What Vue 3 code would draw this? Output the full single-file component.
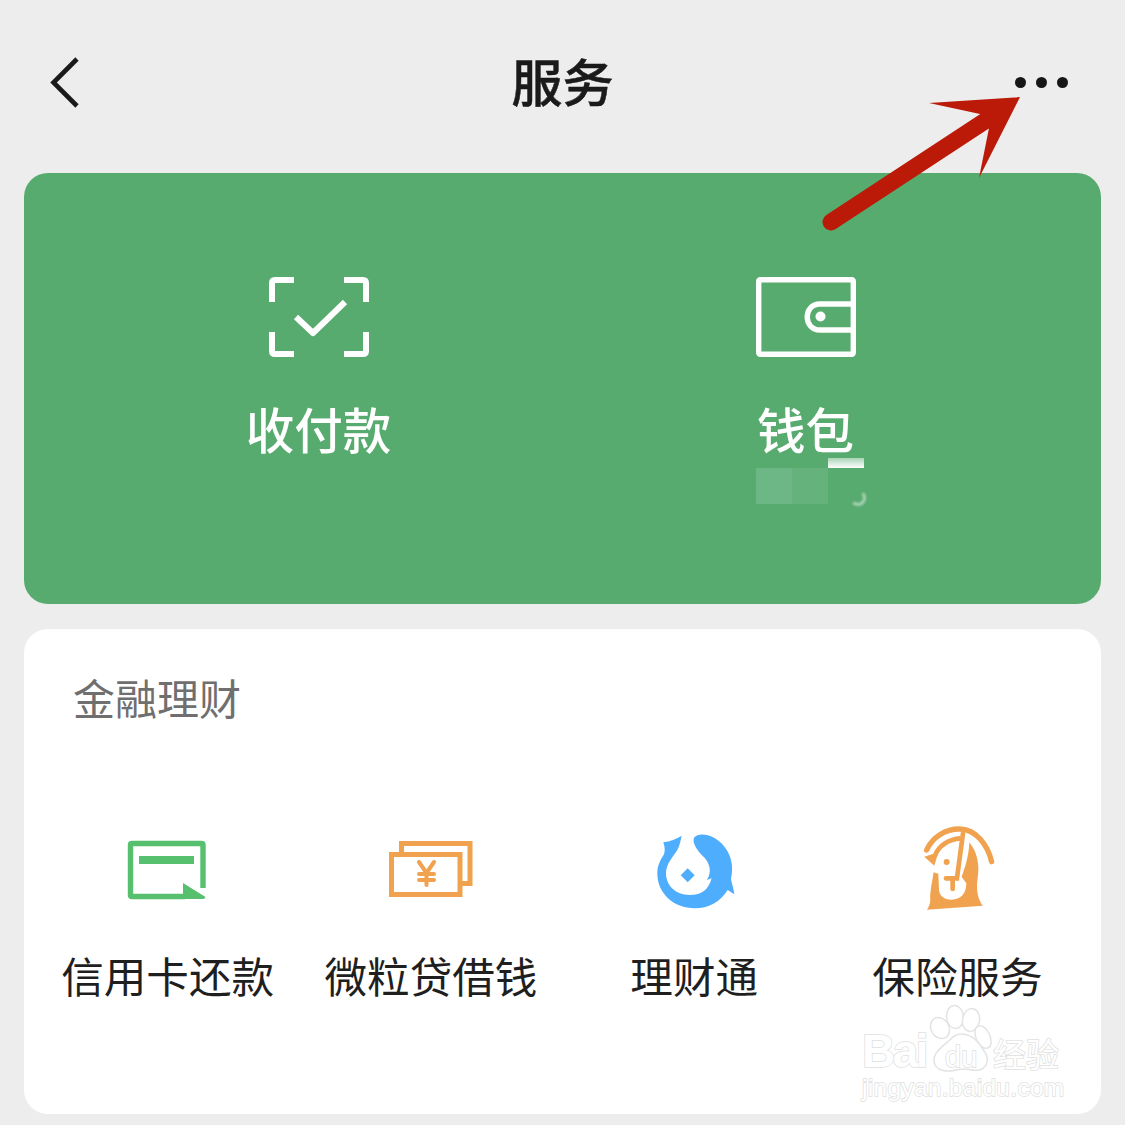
<script setup>
const finance = [
  { label: '信用卡还款', icon: 'card' },
  { label: '微粒贷借钱', icon: 'loan' },
  { label: '理财通', icon: 'fish' },
  { label: '保险服务', icon: 'penguin' }
]
</script>

<template>
  <div class="page">
    <header class="nav">
      <svg class="back" width="32" height="54" viewBox="0 0 32 54" fill="none">
        <path d="M28 3 L4.500 26.500 L28 50" stroke="#1a1a1a" stroke-width="4.600" />
      </svg>
      <h1 class="title">服务</h1>
      <div class="dots"><i></i><i></i><i></i></div>
    </header>

    <section class="pay">
      <div class="pay-item">
        <svg class="pay-icon" width="100" height="80" viewBox="0 0 100 80" fill="none" stroke="#fff" stroke-width="6">
          <path d="M25 3 H6 Q3 3 3 6 V25 M75 3 H94 Q97 3 97 6 V25 M3 55 V74 Q3 77 6 77 H25 M97 55 V74 Q97 77 94 77 H75" />
          <path d="M27 40 L44 56 L76 25" stroke-linejoin="round" />
        </svg>
        <div class="pay-label">收付款</div>
      </div>
      <div class="pay-item">
        <svg class="pay-icon" width="100" height="80" viewBox="0 0 100 80" fill="none" stroke="#fff" stroke-width="5.400">
          <rect x="2.700" y="2.700" width="94.600" height="74.600" rx="1.500" />
          <path d="M97 27 H64 C47 27 47 53 64 53 H97" />
          <circle cx="64.500" cy="39.500" r="5" fill="#fff" stroke="none" />
        </svg>
        <div class="pay-label">钱包</div>
        <div class="smudge">
          <span class="smudge-a"></span>
          <span class="smudge-b"></span>
          <span class="smudge-c"></span>
          <span class="smudge-d"></span>
        </div>
      </div>
    </section>

    <section class="panel">
      <h2 class="panel-title">金融理财</h2>
      <div class="grid">
        <div v-for="item in finance" :key="item.label" class="cell">
          <svg class="cell-icon" width="110" height="90" viewBox="0 0 110 90" fill="none">
            <template v-if="item.icon === 'card'">
              <path d="M90 63 V20 Q90 18.500 88.500 18.500 H19 Q17.500 18.500 17.500 20 V70 Q17.500 71.500 19 71.500 H72" stroke="#56c06e" stroke-width="5.400" />
              <rect x="26" y="31" width="55" height="8" fill="#56c06e" />
              <path d="M70 58 L92.500 72 Q92 74 90 74 H70 Z" fill="#56c06e" />
            </template>
            <template v-else-if="item.icon === 'loan'">
              <path d="M25.500 27 V18.500 H94 V58.500 H86" stroke="#f0a24f" stroke-width="5" />
              <rect x="15.500" y="29.500" width="68.500" height="40" stroke="#f0a24f" stroke-width="5" />
              <path d="M43 37 L50.500 48 L58 37 M43 49 H58 M43 55 H58 M50.500 48 V60" stroke="#f0a24f" stroke-width="4" stroke-linecap="round" stroke-linejoin="round" />
            </template>
            <g v-else-if="item.icon === 'fish'" transform="translate(1 -10) scale(.3333)">
              <path fill="#4fadfd" d="M125 62 C110 72 90 80 70 82 C74 95 76 105 72 118 C58 140 52 155 52 175 C52 235 100 280 165 280 C205 280 240 262 263 225 L283 238 C280 215 275 205 273 192 C285 140 265 95 225 70 C205 58 175 52 162 68 C155 85 175 110 195 130 C215 155 212 180 200 195 L215 190 C205 225 185 240 150 240 C105 240 78 210 78 175 C78 145 100 125 112 105 C120 90 122 75 125 62 Z" />
              <path fill="#4fadfd" d="M143 160 L164 181 L143 202 L122 181 Z" />
            </g>
            <g v-else transform="translate(-262 -10) scale(.3333)">
              <path d="M857 105 C875 65 915 42 955 42 C1005 42 1040 90 1052 140" stroke="#f0a24f" stroke-width="16" stroke-linecap="round" />
              <path d="M882 122 C892 92 925 72 958 70" stroke="#f0a24f" stroke-width="14" />
              <path d="M966 55 L948 190 L915 190 M935 190 V222" stroke="#f0a24f" stroke-width="14" stroke-linecap="round" />
              <path fill="#f0a24f" d="M850 125 L892 112 L880 152 Z" />
              <circle cx="917" cy="141" r="9" fill="#f0a24f" />
              <path fill="#f0a24f" d="M878 172 C873 205 866 235 868 255 C868 268 862 278 858 284 L1025 272 C1010 250 1005 225 1010 190 C1018 145 1005 105 985 82 C985 105 978 145 962 185 L976 205 C976 238 958 254 932 254 C908 254 894 242 894 222 L892 176 Z" />
            </g>
          </svg>
          <div class="cell-label">{{ item.label }}</div>
        </div>
      </div>
    </section>

    <svg class="arrow" width="220" height="150" viewBox="0 0 220 150" fill="none">
      <path d="M11 132 L165 31" stroke="#bb1a09" stroke-width="17" stroke-linecap="round" />
      <path d="M200 7 L109 13 L160 24 L169 38 L159 88 Z" fill="#bb1a09" />
    </svg>

    <div class="mark">
      <svg class="paw" width="120" height="80" viewBox="0 0 120 80" fill="#fff" stroke="#e3e3e3" stroke-width="1.500">
        <ellipse cx="53" cy="26" rx="9" ry="11" transform="rotate(-30 53 26)" />
        <ellipse cx="68" cy="15" rx="8.500" ry="11.500" transform="rotate(-5 68 15)" />
        <ellipse cx="84" cy="18" rx="8.500" ry="11.500" transform="rotate(10 84 18)" />
        <ellipse cx="96" cy="35" rx="7" ry="12" transform="rotate(-25 96 35)" />
        <path d="M63 38 C56 44 47 50 47 58 C47 66 54 69 62 69 C68 69 72 67 76 67 C82 67 88 69 92 68 C100 66 102 58 99 52 C94 44 87 32 75 32 C70 32 66 34 63 38 Z" />
      </svg>
      <div class="mark-row">
        <span class="mark-bai">Bai</span><span class="mark-du">du</span><span class="mark-cn">经验</span>
      </div>
      <div class="mark-url">jingyan.baidu.com</div>
    </div>
  </div>
</template>

<style>
html, body { margin: 0; background: #ededed; }
</style>

<style scoped>
.page {
  position: relative;
  width: 1125px;
  height: 1125px;
  overflow: hidden;
  background: #ededed;
  font-family: "Noto Sans CJK SC", "Noto Sans", sans-serif;
  display: flex;
  flex-direction: column;
  padding: 0 24px;
  box-sizing: border-box;
}
.nav {
  height: 173px;
  flex: none;
  display: grid;
  grid-template-columns: 1fr auto 1fr;
  align-items: center;
  padding-bottom: 8px;
  box-sizing: border-box;
}
.back { margin-left: 25px; }
.title {
  margin: 0 0 6px 0;
  font-size: 51px;
  font-weight: 500;
  -webkit-text-stroke: .5px #1a1a1a;
  color: #1a1a1a;
  line-height: 60px;
}
.dots {
  justify-self: end;
  display: flex;
  gap: 10px;
  margin-right: 33px;
}
.dots i {
  width: 11px;
  height: 11px;
  border-radius: 50%;
  background: #161616;
}
.pay {
  height: 431px;
  flex: none;
  box-sizing: border-box;
  background: #57ab6f;
  border-radius: 24px;
  display: grid;
  grid-template-columns: 487px 487px;
  padding: 104px 0 0 51px;
}
.pay-item {
  display: flex;
  flex-direction: column;
  align-items: center;
}
.pay-label {
  margin-top: 41px;
  font-size: 48.500px;
  line-height: 60px;
  font-weight: 500;
  color: #fff;
}
.smudge {
  position: relative;
  width: 112px;
  height: 50px;
  margin: 0 0 0 12px;
}
.smudge span { position: absolute; }
.smudge-a { left: 0; top: 10px; width: 36px; height: 36px; background: #6db685; }
.smudge-b { left: 36px; top: 10px; width: 36px; height: 36px; background: #65b27d; }
.smudge-c {
  left: 72px;
  top: 0;
  width: 36px;
  height: 10px;
  background: linear-gradient(to bottom, #a9d3b5, #fff);
  filter: blur(.6px);
}
.smudge-d {
  left: 94px;
  top: 32px;
  width: 16px;
  height: 16px;
  box-sizing: border-box;
  border-radius: 50%;
  border: 3px solid transparent;
  border-right-color: #a9d3b5;
  border-bottom-color: #a9d3b5;
  filter: blur(.8px);
}
.panel {
  margin-top: 25px;
  height: 485px;
  flex: none;
  box-sizing: border-box;
  background: #fff;
  border-radius: 24px;
  padding: 43px 0 0 12px;
}
.panel-title {
  margin: 0 0 0 37px;
  font-size: 42px;
  line-height: 50px;
  font-weight: 400;
  color: #6f6f6f;
}
.grid {
  display: grid;
  grid-template-columns: repeat(4, 263.300px);
  margin-top: 46px;
}
.cell {
  display: flex;
  flex-direction: column;
  align-items: center;
}
.cell-icon { display: block; height: 90px; margin-top: 57px; }
.cell-label {
  margin-top: 30px;
  font-size: 42.600px;
  line-height: 60px;
  color: #1f1f1f;
  white-space: nowrap;
}
.arrow { position: absolute; left: 820px; top: 90px; }
.mark {
  position: absolute;
  left: 862px;
  top: 1002px;
  width: 204px;
  height: 100px;
  pointer-events: none;
}
.paw { position: absolute; left: 25px; top: 0; }
.mark-row {
  position: absolute;
  left: 0;
  top: 24px;
  display: flex;
  align-items: baseline;
  white-space: nowrap;
}
.mark-row span, .mark-url {
  font-family: "Liberation Sans", "Noto Sans CJK SC", sans-serif;
  color: #fff;
  -webkit-text-stroke: 1.500px #e0e0e0;
  paint-order: stroke fill;
}
.mark-bai { font-size: 46px; letter-spacing: -2.500px; line-height: 50px; font-weight: 700; width: 68px; }
.mark-du { font-size: 29px; line-height: 50px; width: 63px; padding-left: 15px; box-sizing: border-box; }
.mark-row .mark-cn { font-size: 33px; line-height: 50px; font-family: "Noto Sans CJK SC", sans-serif; }
.mark-url {
  position: absolute;
  left: 0;
  top: 72px;
  font-size: 24.500px;
  line-height: 28px;
  letter-spacing: .3px;
  white-space: nowrap;
}
</style>
